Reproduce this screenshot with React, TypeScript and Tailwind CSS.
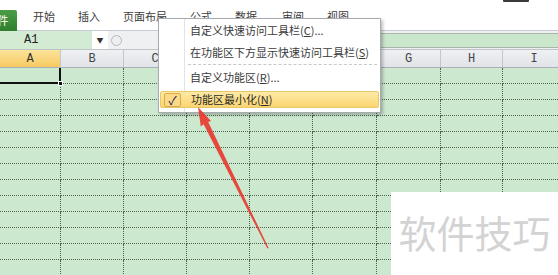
import React from 'react';

const COLS = ['A', 'B', 'C', 'D', 'E', 'F', 'G', 'H', 'I'];
const WIDTHS = [61, 63, 63, 63, 63, 64, 64, 62, 63];
const ROWS = 13;

const TABS = [
  { label: '开始', x: 33 },
  { label: '插入', x: 78 },
  { label: '页面布局', x: 123 },
  { label: '公式', x: 190 },
  { label: '数据', x: 235 },
  { label: '审阅', x: 282 },
  { label: '视图', x: 327 },
];

const cjk = { fontFamily: '"Noto Sans CJK SC", "Noto Sans", sans-serif' };

const MenuItem: React.FC<{ text: string; hot: string; tail?: string; active?: boolean }> = ({ text, hot, tail, active }) => (
  <div
    className={
      'relative flex items-center h-[17px] mx-[1px] pl-[30px] text-[11px] leading-none ' +
      (active
        ? 'bg-gradient-to-b from-[#fdeaa6] to-[#fbd56f] border border-[#e9c86a] rounded-[2px] text-[#2a2a2a]'
        : 'text-[#3a3a3a]')
    }
  >
    {active && (
      <div className="absolute left-[3px] top-[1px] w-[17px] h-[14px] border border-[#d9a94a] bg-[#fcd986] rounded-[2px] flex items-center justify-center text-[12px] text-[#1d2a5a]">
        ✓
      </div>
    )}
    <span>
      {text}(<span className="underline">{hot}</span>){tail}
    </span>
  </div>
);

const App: React.FC = () => {
  return (
    <div className="relative w-[558px] h-[275px] overflow-hidden bg-white select-none" style={cjk}>
      {/* ribbon tabs */}
      <div className="relative h-[31px] border-b border-[#c6cbd2] bg-white">
        <div className="absolute left-[-22px] top-[10px] w-[39px] h-[21px] bg-gradient-to-b from-[#4a9d47] to-[#2f7f2e] rounded-t-[2px] flex items-center justify-center text-white text-[11px]">
          文件
        </div>
        {TABS.map((t) => (
          <span key={t.label} className="absolute top-[11px] text-[11px] leading-none text-[#3c3c3c]" style={{ left: t.x }}>
            {t.label}
          </span>
        ))}
        <div className="absolute left-[503px] top-[-3px] w-[26px] h-[5px] bg-[#3a3a3a] rounded-[1px]" />
      </div>

      {/* formula bar */}
      <div className="flex h-[19px] bg-[#eef0f2] border-b border-[#bfc4ca]">
        <div className="w-[92px] bg-[#d3ead3] flex items-center pl-[24px] text-[12px] text-[#222]" style={{ fontFamily: '"Liberation Mono", monospace' }}>
          A1
        </div>
        <div className="w-[16px] bg-white flex items-center justify-center text-[7px] text-[#333]">▼</div>
        <div className="flex items-center pl-[3px]">
          <div className="w-[11px] h-[11px] rounded-full border border-[#b5b9be] bg-[#eceef0]" />
        </div>
        <div className="flex-1" />
        <div className="w-[178px] mt-[2px] mb-[1px] bg-[#cbe7cb] border-y border-[#a9b6a9]" />
      </div>

      {/* column headers */}
      <div className="flex h-[18px] border-b border-[#a9b0b8]" style={{ fontFamily: '"Liberation Mono", monospace' }}>
        {COLS.map((c, i) => (
          <div
            key={c}
            className={
              'shrink-0 flex items-center justify-center text-[12px] border-r border-[#c3c7cc] ' +
              (i === 0
                ? 'bg-gradient-to-b from-[#fbe49a] to-[#f6c95f] text-[#333]'
                : 'bg-gradient-to-b from-[#eef0f2] to-[#e1e4e8] text-[#444]')
            }
            style={{ width: WIDTHS[i] }}
          >
            {c}
          </div>
        ))}
      </div>

      {/* grid */}
      <div className="bg-[#cce8cf]">
        {Array.from({ length: ROWS }).map((_, r) => (
          <div key={r} className="flex h-[16px]">
            {COLS.map((c, i) => {
              const sel = r === 0 && i === 0;
              return (
                <div
                  key={c}
                  className={
                    sel
                      ? 'relative shrink-0 border-b-2 border-r-2 border-solid border-[#111]'
                      : 'shrink-0 border-b border-r border-dotted border-[#4f5f50]'
                  }
                  style={{ width: WIDTHS[i] }}
                >
                  {sel && <div className="absolute right-[-4px] bottom-[-4px] w-[5px] h-[5px] bg-[#111] border border-white" />}
                </div>
              );
            })}
          </div>
        ))}
      </div>

      {/* context menu */}
      <div className="absolute left-[158px] top-[18px] w-[223px] h-[95px] bg-white border border-[#a7abb0] shadow-[2px_2px_3px_rgba(0,0,0,0.25)]">
        <div className="absolute left-[25px] top-0 bottom-0 border-l border-[#e2e3e5]" />
        <div className="flex flex-col">
          <div className="h-[3px]" />
          <MenuItem text="自定义快速访问工具栏" hot="C" tail="..." />
          <div className="h-[5px]" />
          <MenuItem text="在功能区下方显示快速访问工具栏" hot="S" />
          <div className="h-[3px]" />
          <div className="ml-[29px] mr-[3px] border-t border-dashed border-[#c5c8cc]" />
          <div className="h-[4px]" />
          <MenuItem text="自定义功能区" hot="R" tail="..." />
          <div className="h-[5px]" />
          <MenuItem text="功能区最小化" hot="N" active />
        </div>
      </div>

      {/* red arrow */}
      <svg className="absolute left-0 top-0 pointer-events-none" width="558" height="275">
        <polygon
          points="198,107 211,121 208.2,122 268.6,248 267.4,248.4 203.6,124.2 200.8,126.5"
          fill="#e83a30"
          fillOpacity="0.92"
        />
      </svg>

      {/* watermark */}
      <div className="absolute left-[391px] top-[192px] right-0 bottom-0 bg-white flex items-center justify-center">
        <span className="text-[38px] leading-none text-[#d3d3d3] mt-[-4px]">软件技巧</span>
      </div>
    </div>
  );
};

export default App;
